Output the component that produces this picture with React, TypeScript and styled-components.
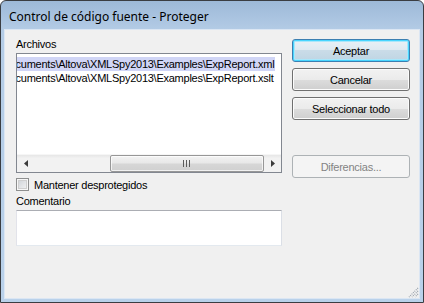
import styled, { createGlobalStyle } from 'styled-components'

const GlobalStyle = createGlobalStyle`
  html, body {
    margin: 0;
    padding: 0;
    background: #ffffff;
  }
`

const Window = styled.div`
  width: 424px;
  height: 303px;
  box-sizing: border-box;
  display: flex;
  flex-direction: column;
  border: 1px solid #3a3d42;
  border-radius: 6px 6px 0 0;
  background: linear-gradient(180deg, #9db9d8 0px, #b4cce6 30px, #b9d1ea 100%);
  padding: 0 4px 4px 4px;
  overflow: hidden;
`

const TitleBar = styled.div`
  height: 29px;
  display: flex;
  align-items: center;
  padding-left: 4px;
  padding-top: 1px;
  box-sizing: border-box;
  font-family: 'Noto Sans', 'Open Sans', sans-serif;
  font-size: 12px;
  color: #000;
`

const Client = styled.div`
  flex: 1;
  position: relative;
  display: flex;
  gap: 10px;
  padding: 0 8px 0 11px;
  background: #f0f0f0;
  box-shadow: 0 0 0 1px #dbe6f3;
  font-family: 'Liberation Sans', Arial, sans-serif;
  font-size: 11px;
  letter-spacing: -0.25px;
  color: #000;
`

const LeftColumn = styled.div`
  width: 266px;
  display: flex;
  flex-direction: column;
  padding-top: 8px;
`

const RightColumn = styled.div`
  width: 118px;
  display: flex;
  flex-direction: column;
  gap: 6px;
  padding-top: 9px;
`

const Label = styled.div`
  height: 13px;
  line-height: 13px;
  margin-bottom: 2px;
`

const ListBox = styled.div`
  position: relative;
  height: 120px;
  box-sizing: border-box;
  border: 1px solid #828790;
  background: #fff;
  display: flex;
  flex-direction: column;
  overflow: hidden;
`

const ListItems = styled.div`
  flex: 1;
  overflow: hidden;
  padding-top: 3px;
  white-space: nowrap;
`

const ListRow = styled.div`
  height: 14px;
  line-height: 14px;
`

const RowText = styled.span<{ $selected?: boolean }>`
  display: inline-block;
  padding: 0 1px;
  background: ${({ $selected }) => ($selected ? '#d0d5f6' : 'transparent')};
`

const HScroll = styled.div`
  height: 17px;
  display: flex;
  background: linear-gradient(180deg, #e6e6e6 0%, #f2f2f2 20%, #f2f2f2 100%);
  border-top: 1px solid #f6f6f6;
`

const ScrollArrow = styled.div`
  width: 17px;
  display: flex;
  align-items: center;
  justify-content: center;
`

const ScrollTrack = styled.div`
  flex: 1;
  position: relative;
`

const ScrollThumb = styled.div`
  position: absolute;
  top: 0;
  bottom: 0;
  box-sizing: border-box;
  border: 1px solid #979797;
  border-radius: 2px;
  background: linear-gradient(180deg, #f3f3f3 0%, #e8e8e8 45%, #d6d6d6 55%, #d0d0d0 100%);
  box-shadow: inset 0 0 0 1px rgba(255, 255, 255, 0.7);
  display: flex;
  align-items: center;
  justify-content: center;
`

const CheckRow = styled.label`
  display: flex;
  align-items: center;
  gap: 5px;
  height: 13px;
  margin-top: 5px;
`

const CheckBox = styled.span`
  width: 13px;
  height: 13px;
  box-sizing: border-box;
  border: 1px solid #8e8f8f;
  box-shadow: inset 0 0 0 1px #f7f7f7, inset 0 0 0 2px #cfcfcf;
  background-image: linear-gradient(135deg, #cbcfd5 0%, #f6f6f6 100%);
`

const CommentLabel = styled(Label)`
  margin-top: 4px;
`

const CommentBox = styled.div`
  height: 36px;
  box-sizing: border-box;
  background: #fff;
  border: 1px solid #e2e3ea;
  border-top-color: #abadb3;
  border-bottom-color: #e3e9ef;
  border-right-color: #dbdfe6;
`

const Button = styled.button<{ $default?: boolean }>`
  height: 23px;
  box-sizing: border-box;
  padding: 0;
  font-family: 'Liberation Sans', Arial, sans-serif;
  font-size: 11px;
  letter-spacing: -0.25px;
  color: #000;
  border-radius: 3px;
  border: 1px solid ${({ $default }) => ($default ? '#3c7fb1' : '#707070')};
  background: ${({ $default }) =>
    $default
      ? 'linear-gradient(180deg, #e9f1f6 0%, #dde9f1 50%, #cadce8 50%, #bfd5e3 100%)'
      : 'linear-gradient(180deg, #f2f2f2 0%, #ebebeb 50%, #dddddd 50%, #cfcfcf 100%)'};
  box-shadow: ${({ $default }) =>
    $default ? 'inset 0 0 0 1px #48d5fe, inset 0 0 0 2px #a9e7fb' : 'inset 0 0 0 1px #fcfcfc'};

  &:disabled {
    border-color: #adb2b5;
    background: #f4f4f4;
    box-shadow: none;
    color: #838383;
  }
`

const DiffButton = styled(Button)`
  margin-top: 29px;
`

const Grip = styled.svg`
  position: absolute;
  right: 0;
  bottom: 0;
`

const files = [
  'Documents\\Altova\\XMLSpy2013\\Examples\\ExpReport.xml',
  'Documents\\Altova\\XMLSpy2013\\Examples\\ExpReport.xslt',
]

const scrollLeft = 16
const thumbLeft = 76
const thumbWidth = 154

export default function App() {
  return (
    <>
      <GlobalStyle />
      <Window>
        <TitleBar>Control de código fuente - Proteger</TitleBar>
        <Client>
          <LeftColumn>
            <Label>Archivos</Label>
            <ListBox>
              <ListItems>
                <div style={{ transform: `translateX(-${scrollLeft}px)` }}>
                  {files.map((f, i) => (
                    <ListRow key={f}>
                      <RowText $selected={i === 0}>{f}</RowText>
                    </ListRow>
                  ))}
                </div>
              </ListItems>
              <HScroll>
                <ScrollArrow>
                  <svg width="4" height="7" viewBox="0 0 4 7">
                    <path d="M4 0 L0 3.5 L4 7 Z" fill="#3c3c3c" />
                  </svg>
                </ScrollArrow>
                <ScrollTrack>
                  <ScrollThumb style={{ left: thumbLeft, width: thumbWidth }}>
                    <svg width="8" height="7" viewBox="0 0 8 7">
                      <path d="M0.5 0v7M3.5 0v7M6.5 0v7" stroke="#5b5b5b" strokeWidth="1" />
                    </svg>
                  </ScrollThumb>
                </ScrollTrack>
                <ScrollArrow>
                  <svg width="4" height="7" viewBox="0 0 4 7">
                    <path d="M0 0 L4 3.5 L0 7 Z" fill="#3c3c3c" />
                  </svg>
                </ScrollArrow>
              </HScroll>
            </ListBox>
            <CheckRow>
              <CheckBox />
              Mantener desprotegidos
            </CheckRow>
            <CommentLabel>Comentario</CommentLabel>
            <CommentBox />
          </LeftColumn>
          <RightColumn>
            <Button $default>Aceptar</Button>
            <Button>Cancelar</Button>
            <Button>Seleccionar todo</Button>
            <DiffButton disabled>Diferencias...</DiffButton>
          </RightColumn>
          <Grip width="12" height="12" viewBox="0 0 12 12">
            <path d="M11 2 L2 11 M11 5 L5 11 M11 8 L8 11" stroke="#9aa3ad" strokeWidth="1.2" strokeDasharray="1 1" />
          </Grip>
        </Client>
      </Window>
    </>
  )
}
